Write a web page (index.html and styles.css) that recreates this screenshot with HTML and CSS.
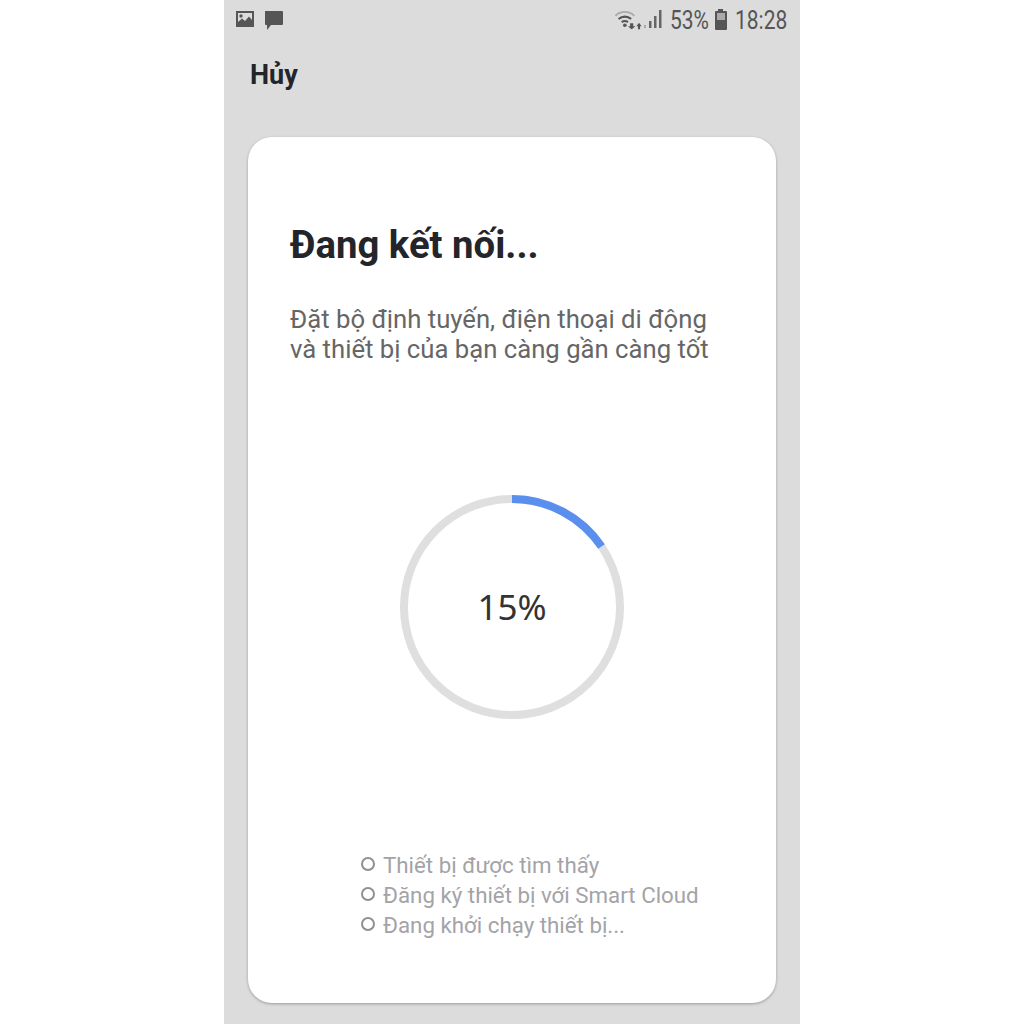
FILE: index.html
```html
<!DOCTYPE html>
<html>
    <head>
        <meta charset="utf-8">
        <link rel="stylesheet" href="styles.css">
    </head>

    <body>
        <div class="phone">
            <div class="status">
                <div class="status-left">
                    <svg class="ico-pic" width="20" height="18" viewBox="0 0 20 18">
                        <path fill="#555" fill-rule="evenodd" d="M1 1h18v16H1z M3 3v9l4-3.500 3 2.500 4-4.500 3 3.500V3z"/>
                        <circle cx="6" cy="6" r="1.700" fill="#555"/>
                    </svg>
                    <svg class="ico-msg" width="20" height="20" viewBox="0 0 20 20">
                        <path fill="#555" d="M1 1h17a1 1 0 0 1 1 1v12a1 1 0 0 1-1 1H7l-4 5v-5H2a1 1 0 0 1-1-1z"/>
                    </svg>
                </div>
                <div class="status-right">
                    <svg class="ico-wifi" width="26" height="20" viewBox="0 0 26 20">
                        <path fill="none" stroke="#aaa" stroke-width="1.800" d="M1 7c5-5 13-5 18 0"/>
                        <path fill="none" stroke="#555" stroke-width="2" d="M4 10c3.500-3 8.500-3 12 0"/>
                        <path fill="none" stroke="#555" stroke-width="2" d="M7 13c2-1.500 4-1.500 6 0"/>
                        <circle cx="10" cy="16" r="1.700" fill="#555"/>
                        <path fill="#555" d="M15 14h3v3h2l-3.500 3-3.500-3h2z M21 17l2.500-3.500 2.500 3.500h-1.500v3h-2v-3z"/>
                    </svg>
                    <svg class="ico-signal" width="20" height="22" viewBox="0 0 20 22">
                        <rect x="1" y="17" width="2" height="3" fill="#aaa"/>
                        <rect x="6" y="13" width="2.500" height="7" fill="#666"/>
                        <rect x="11" y="8" width="2.500" height="12" fill="#666"/>
                        <rect x="16" y="2" width="2.500" height="18" fill="#666"/>
                    </svg>
                    <span class="pct">53%</span>
                    <svg class="ico-batt" width="14" height="21" viewBox="0 0 14 21">
                        <path fill="#555" d="M4 0h5v2h3a1 1 0 0 1 1 1v17a1 1 0 0 1-1 1H2a1 1 0 0 1-1-1V3a1 1 0 0 1 1-1h2z"/>
                        <rect x="3" y="4" width="8" height="7" fill="#aaa"/>
                    </svg>
                    <span class="time">18:28</span>
                </div>
            </div>

            <div class="cancel">Hủy</div>

            <div class="card">
                <h1>Đang kết nối...</h1>
                <p class="desc">Đặt bộ định tuyến, điện thoại di động<br>và thiết bị của bạn càng gần càng tốt</p>

                <div class="ring">
                    <svg width="224" height="224" viewBox="0 0 224 224">
                        <circle cx="112" cy="112" r="108" fill="none" stroke="#dfdfdf" stroke-width="8"/>
                        <path d="M112 4A108 108 0 0 1 201.500 51.600" fill="none" stroke="#5b8fee" stroke-width="8"/>
                    </svg>
                    <span class="ring-text">15%</span>
                </div>

                <ul class="steps">
                    <li>Thiết bị được tìm thấy</li>
                    <li>Đăng ký thiết bị với Smart Cloud</li>
                    <li>Đang khởi chạy thiết bị...</li>
                </ul>
            </div>
        </div>
    </body>
</html>
```

FILE: styles.css
```css
* {
    box-sizing: border-box;
}

body {
    margin: 0;
    padding: 0;
    background-color: #fff;
    font-family: Roboto, "Liberation Sans", sans-serif;
}

.phone {
    background-color: #dcdcdc;
    width: 576px;
    height: 1024px;
    margin: auto;
    overflow: hidden;
    padding: 0 24px;
}

.status {
    display: flex;
    justify-content: space-between;
    height: 40px;
    margin: 0 -24px;
    padding: 8px 13px 0 11px;
}

.status-left, .status-right {
    display: flex;
    align-items: flex-start;
}

.status-left {
    gap: 9px;
    padding-top: 2px;
}

.status-right {
    color: #555;
    font-size: 25px;
    line-height: 25px;
}

.ico-wifi {
    margin: 1px 2px 0 0;
    transform: scale(1.050);
}

.ico-signal {
    margin: 0 7px 0 0;
}

.ico-batt {
    margin: 1px 7px 0 7px;
}

.pct, .time {
    transform: scaleX(0.84);
    transform-origin: left center;
    white-space: nowrap;
}

.pct {
    width: 37px;
}

.time {
    width: 52px;
}

.cancel {
    font-size: 27px;
    font-weight: 700;
    color: #23252b;
    line-height: 30px;
    margin: 20px 0 0 2px;
    height: 77px;
}

.card {
    background-color: #fff;
    height: 866px;
    border-radius: 24px;
    box-shadow: 0 1px 3px rgba(0, 0, 0, 0.3);
    padding: 85px 42px 0;
}

h1 {
    margin: 0;
    font-size: 38.300px;
    font-weight: 700;
    line-height: 46px;
    color: #23252b;
}

.desc {
    margin: 36px 0 0;
    font-size: 25.700px;
    line-height: 30px;
    color: #666;
}

.ring {
    position: relative;
    width: 224px;
    height: 224px;
    margin: 131px auto 0;
}

.ring svg {
    display: block;
}

.ring-text {
    position: absolute;
    inset: 0 0 2px 0;
    display: flex;
    align-items: center;
    justify-content: center;
    font-family: "Noto Sans", sans-serif;
    font-size: 35px;
    color: #333;
}

.steps {
    list-style: none;
    margin: 131px 0 0 70px;
    padding: 0;
    font-size: 22.300px;
    line-height: 30px;
    color: #a3a3a8;
}

.steps li {
    display: flex;
    align-items: center;
    gap: 8px;
    margin-left: 1px;
}

.steps li::before {
    content: "";
    width: 10px;
    height: 10px;
    border: 2px solid #8f8f94;
    border-radius: 50%;
    margin-top: -3px;
    margin-right: 0;
}
```
